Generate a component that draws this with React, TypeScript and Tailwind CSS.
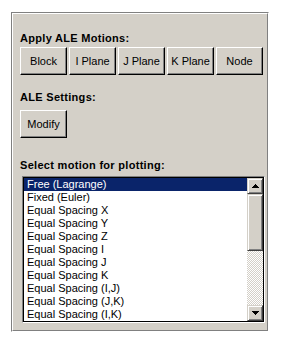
const items = [
  "Free (Lagrange)",
  "Fixed (Euler)",
  "Equal Spacing X",
  "Equal Spacing Y",
  "Equal Spacing Z",
  "Equal Spacing I",
  "Equal Spacing J",
  "Equal Spacing K",
  "Equal Spacing (I,J)",
  "Equal Spacing (J,K)",
  "Equal Spacing (I,K)",
];

const motions = ["Block", "I Plane", "J Plane", "K Plane", "Node"];

const font = { fontFamily: '"Liberation Sans", Arial, sans-serif' };

const WinButton = ({ label }: { label: string }) => (
  <button
    className="w-[47px] h-[28px] bg-[#d4d0c8] border border-t-white border-l-white border-b-black border-r-black shadow-[inset_-1px_-1px_#808080] text-[11px] leading-[13px] text-black"
    style={font}
  >
    {label}
  </button>
);

const Arrow = ({ up }: { up?: boolean }) => (
  <div className="w-[16px] h-[16px] bg-[#d4d0c8] border border-t-[#d4d0c8] border-l-[#d4d0c8] border-b-[#404040] border-r-[#404040] shadow-[inset_1px_1px_white,inset_-1px_-1px_#808080] flex items-center justify-center">
    <svg width="7" height="4" viewBox="0 0 7 4">
      {up ? (
        <path d="M3 0h1v1h1v1h1v1h1v1H0V3h1V2h1V1h1z" fill="black" />
      ) : (
        <path d="M0 0h7v1H6v1H5v1H4v1H3V3H2V2H1V1H0z" fill="black" />
      )}
    </svg>
  </div>
);

export default function App() {
  return (
    <div className="w-[285px] h-[344px] bg-white pl-[11px] pt-[12px]" style={font}>
      {/* group panel */}
      <div className="w-[258px] h-[320px] border border-t-[#808080] border-l-[#808080] border-b-white border-r-white">
        <div className="h-full bg-[#d4d0c8] border border-t-white border-l-white border-b-[#808080] border-r-[#808080] pl-[7px] pt-[18px]">
          <p className="text-[11px] leading-[13px] font-bold tracking-[0.3px] text-black">Apply ALE Motions:</p>
          <div className="flex gap-[2px] mt-[2px]">
            {motions.map((m) => (
              <WinButton key={m} label={m} />
            ))}
          </div>

          <p className="text-[11px] leading-[13px] font-bold tracking-[0.3px] text-black mt-[16px]">ALE Settings:</p>
          <div className="mt-[6px]">
            <WinButton label="Modify" />
          </div>

          <p className="text-[11px] leading-[13px] font-bold tracking-[0.3px] text-black mt-[21px]">
            Select motion for plotting:
          </p>

          {/* listbox */}
          <div className="ml-[2px] mt-[4px] w-[243px] border border-t-[#808080] border-l-[#808080] border-b-white border-r-white">
            <div className="flex bg-white border border-black">
              <ul className="flex-1 flex flex-col">
                {items.map((it, i) => (
                  <li
                    key={it}
                    className={
                      i === 0
                        ? "h-[13px] pl-[3px] text-[11px] leading-[13px] bg-[#0a246a] text-white"
                        : "h-[13px] pl-[3px] text-[11px] leading-[13px] text-black"
                    }
                  >
                    {it}
                  </li>
                ))}
              </ul>
              {/* scrollbar */}
              <div className="w-[16px] flex flex-col">
                <Arrow up />
                <div className="h-[57px] bg-[#d4d0c8] border border-t-[#d4d0c8] border-l-[#d4d0c8] border-b-[#404040] border-r-[#404040] shadow-[inset_1px_1px_white,inset_-1px_-1px_#808080]" />
                <div className="flex-1 bg-[repeating-conic-gradient(#d4d0c8_0_25%,white_0_50%)] bg-[length:2px_2px]" />
                <Arrow />
              </div>
            </div>
          </div>
        </div>
      </div>
    </div>
  );
}
